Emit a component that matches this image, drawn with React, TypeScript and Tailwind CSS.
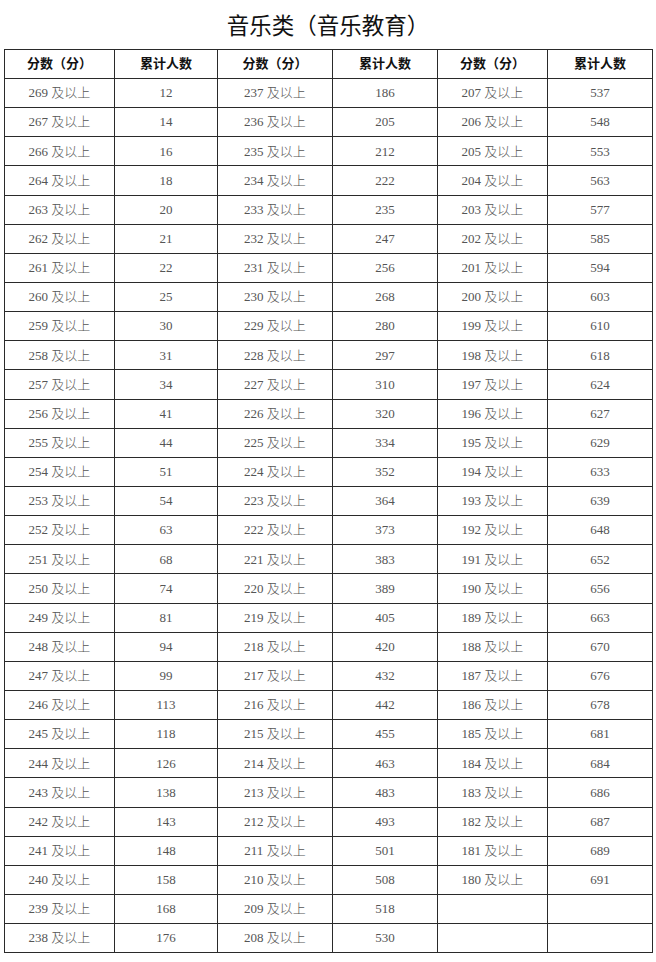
const col1: [number, number][] = [
  [269, 12], [267, 14], [266, 16], [264, 18], [263, 20], [262, 21], [261, 22], [260, 25],
  [259, 30], [258, 31], [257, 34], [256, 41], [255, 44], [254, 51], [253, 54], [252, 63],
  [251, 68], [250, 74], [249, 81], [248, 94], [247, 99], [246, 113], [245, 118], [244, 126],
  [243, 138], [242, 143], [241, 148], [240, 158], [239, 168], [238, 176],
];

const col2Counts = [
  186, 205, 212, 222, 235, 247, 256, 268, 280, 297, 310, 320, 334, 352, 364, 373, 383, 389,
  405, 420, 432, 442, 455, 463, 483, 493, 501, 508, 518, 530,
];

const col3Counts = [
  537, 548, 553, 563, 577, 585, 594, 603, 610, 618, 624, 627, 629, 633, 639, 648, 652, 656,
  663, 670, 676, 678, 681, 684, 686, 687, 689, 691,
];

const cell = "border border-[#2a2a2a] text-center align-middle p-0";

export default function App() {
  return (
    <div
      className="w-[656px] h-[962px] bg-white"
      style={{ fontFamily: '"Liberation Serif", "Noto Sans CJK SC", serif' }}
    >
      <h1 className="pt-[14px] h-[49px] text-center text-[22.5px] leading-[26px] text-[#111] font-normal">
        音乐类（音乐教育）
      </h1>
      <table className="ml-[4px] w-[648px] border-collapse table-fixed">
        <colgroup>
          <col className="w-[110px]" />
          <col className="w-[103px]" />
          <col className="w-[115px]" />
          <col className="w-[105px]" />
          <col className="w-[110px]" />
          <col className="w-[105px]" />
        </colgroup>
        <thead>
          <tr className="h-[29px]">
            {["分数（分）", "累计人数", "分数（分）", "累计人数", "分数（分）", "累计人数"].map((h, i) => (
              <th key={i} className={`${cell} text-[13px] font-bold text-[#111]`}>
                {h}
              </th>
            ))}
          </tr>
        </thead>
        <tbody className="text-[13px] text-[#555] font-light">
          {col1.map(([s, n], i) => {
            const s3 = 207 - i;
            const has3 = i < col3Counts.length;
            return (
              <tr key={s} className="h-[29.15px]">
                <td className={cell}>{s} 及以上</td>
                <td className={cell}>{n}</td>
                <td className={cell}>{237 - i} 及以上</td>
                <td className={cell}>{col2Counts[i]}</td>
                <td className={cell}>{has3 ? `${s3} 及以上` : ""}</td>
                <td className={cell}>{has3 ? col3Counts[i] : ""}</td>
              </tr>
            );
          })}
        </tbody>
      </table>
    </div>
  );
}
